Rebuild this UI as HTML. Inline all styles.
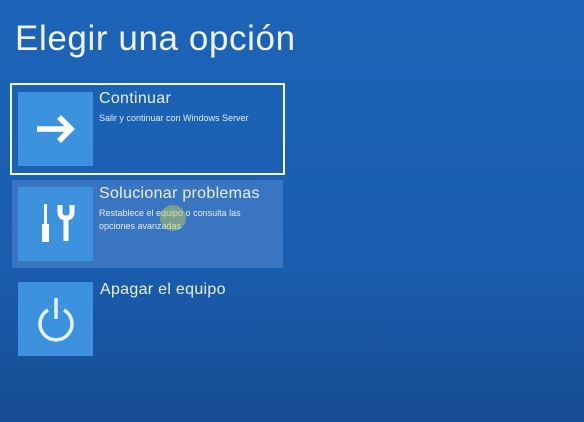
<!DOCTYPE html>
<html><head><meta charset="utf-8"><style>
html,body{margin:0;padding:0}
body{width:584px;height:422px;overflow:hidden;position:relative;
background:linear-gradient(180deg,#1c64b8 0%,#1a5eb0 60%,#164c92 100%);
font-family:"Liberation Sans",sans-serif;color:#fff}
.t{position:absolute;left:15px;top:19px;font-size:35px;color:#eef3fa;letter-spacing:0.6px}
.box{position:absolute}
.tile{position:absolute;left:18px;width:75px;height:74px;background:#3d92de}
.h{position:absolute;left:99px;font-size:16px;color:#e8eef8;letter-spacing:0.3px}
.s{position:absolute;left:99px;font-size:9px;line-height:13px;color:#e4ecf7}
</style></head><body>
<div class="t">Elegir una opción</div>
<div class="box" style="left:10px;top:83px;width:271px;height:88px;border:2px solid #f4f7fb"></div>
<div class="box" style="left:12px;top:180px;width:271px;height:88px;background:#3a75c2"></div>
<div class="tile" style="top:92px"><svg width="75" height="74"><path d="M19 37H53M41 25L53 37L41 49" stroke="#fff" stroke-width="5.5" fill="none"/></svg></div>
<div class="tile" style="top:187px"><svg width="75" height="74"><rect x="26" y="17" width="3" height="20" fill="#fff"/><rect x="24" y="37" width="7" height="18" fill="#fff"/><path d="M42 18v7q0 6 6 6t6-6v-7M48 30v24" stroke="#fff" stroke-width="5" fill="none"/></svg></div>
<div class="tile" style="top:282px"><svg width="75" height="74"><path d="M30 28A16 16 0 1 0 46 28" stroke="#e8eef6" stroke-width="3.5" fill="none"/><path d="M38 16V37" stroke="#e8eef6" stroke-width="3.5"/></svg></div>
<div class="h" style="top:90px">Continuar</div>
<div class="s" style="top:112px">Salir y continuar con Windows Server</div>
<div class="h" style="top:185px">Solucionar problemas</div>
<div class="s" style="top:207px">Restablece el equipo o consulta las<br>opciones avanzadas</div>
<div class="h" style="top:281px;left:100px">Apagar el equipo</div>
<div style="position:absolute;left:160px;top:205px;width:26px;height:26px;border-radius:50%;background:rgba(200,210,80,0.45)"></div>
</body></html>
